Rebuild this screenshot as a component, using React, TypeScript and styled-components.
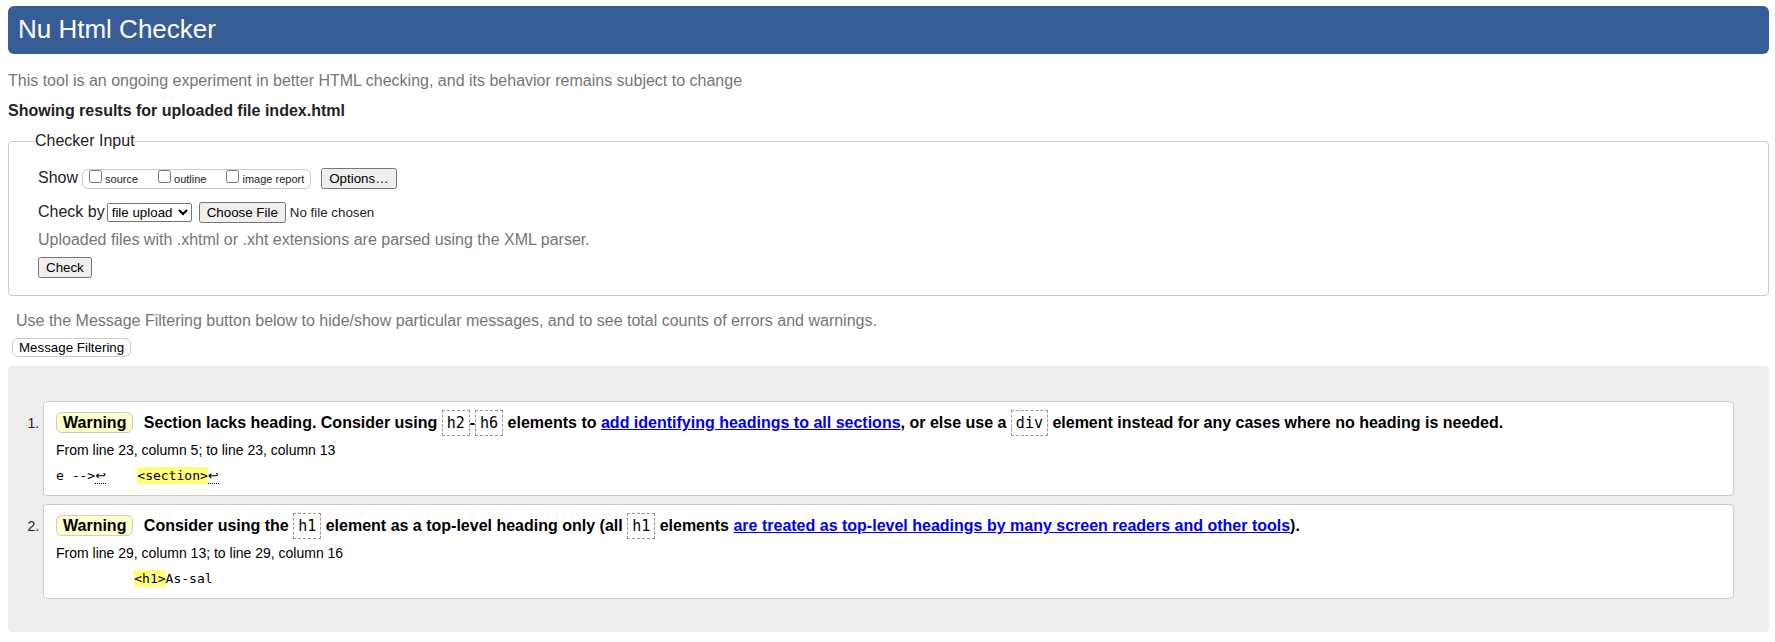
import React from "react";
import styled, { createGlobalStyle } from "styled-components";

const GlobalStyle = createGlobalStyle`
  body {
    margin: 6px 6px 10px 8px;
    background: #fff;
    color: #1f2126;
    font-family: Arial, "Liberation Sans", sans-serif;
    font-size: 16px;
    line-height: 20px;
  }
  button, select, input {
    font-family: Arial, "Liberation Sans", sans-serif;
  }
`;

const Banner = styled.header`
  padding: 0 10px;
  border-radius: 6px;
  background: #365d95;
  color: #fff;
`;

const Title = styled.h1`
  margin: 0;
  padding-bottom: 2px;
  font-size: 26px;
  font-weight: normal;
  line-height: 46px;
`;

const Tagline = styled.p`
  margin: 17px 0 10px;
  color: #767676;
`;

const ResultsHeading = styled.h2`
  margin: 0 0 10px;
  font-size: 16px;
  font-weight: bold;
`;

const InputPanel = styled.fieldset`
  margin: 0;
  padding: 0 26px 17px;
  border: 1px solid #ccc;
  border-radius: 4px;
`;

const PanelLegend = styled.legend`
  padding: 0;
`;

const Fields = styled.div`
  display: flex;
  flex-direction: column;
  align-items: flex-start;
  padding: 17px 3px 0;
`;

const FieldRow = styled.div<{ $below: number }>`
  display: flex;
  align-items: baseline;
  margin-bottom: ${({ $below }) => $below}px;
`;

const ShowOptions = styled.span`
  display: inline-flex;
  align-items: baseline;
  gap: 20px;
  margin: 0 10px 0 4px;
  padding: 0 6px;
  border: 1px solid #ccc;
  border-radius: 6px;
  font-size: 11px;
  line-height: 17px;
`;

const ShowOption = styled.label`
  display: inline-flex;
  align-items: baseline;
  gap: 3px;

  input {
    width: 13px;
    height: 13px;
    margin: 0;
  }
`;

const MethodSelect = styled.select`
  width: 85px;
  margin: 0 7px 0 2px;
`;

const Hint = styled.p`
  margin: 0 0 7px;
  color: #767676;
`;

const FilterHint = styled.p`
  margin: 15px 8px 7px;
  color: #767676;
`;

const FilterButton = styled.button`
  display: block;
  margin: 0 4px 9px;
  padding: 1px 6px;
  border: 1px solid #ccc;
  border-radius: 6px;
  background: #fff;
  color: #000;
`;

const MessageList = styled.ol`
  display: grid;
  gap: 8px;
  margin: 0;
  padding: 35px 35px 33px;
  border-radius: 4px;
  background: #eee;
  font-size: 14px;
`;

const Message = styled.li`
  padding: 11px 12px 10px;
  border: 1px solid #ccc;
  border-radius: 4px;
  background: #fff;
  color: #000;

  &::marker {
    color: #1f2126;
  }
`;

const MessageText = styled.p`
  margin: 0 0 9px;
  font-size: 16px;
  font-weight: bold;
`;

const Badge = styled.strong`
  margin-right: 6px;
  padding: 1px 6px;
  border: 1px solid #ccc;
  border-radius: 6px;
  background: #ffc;
`;

const Code = styled.code`
  padding: 3px 4px;
  border: 1px dashed #999;
  font-family: "DejaVu Sans Mono", monospace;
  font-size: 15px;
  font-weight: normal;
  line-height: 1;
`;

const DocLink = styled.a`
  color: #00e;
`;

const Location = styled.p`
  margin: 0 0 9px;
  line-height: 16px;
`;

const Snippet = styled.pre`
  margin: 0;
  font-family: "DejaVu Sans Mono", monospace;
  font-size: 13px;
  line-height: 18px;
`;

const Highlight = styled.mark`
  padding: 1px 0;
  background: #ff7;
  color: #000;
`;

const LineBreak = styled.span`
  border-bottom: 1px dotted #000;
  font-family: "DejaVu Sans", sans-serif;
  line-height: 1;
`;

const showOptions = ["source", "outline", "image report"];

export default function App() {
  return (
    <>
      <GlobalStyle />
      <Banner>
        <Title>Nu Html Checker</Title>
      </Banner>
      <main>
        <Tagline>
          This tool is an ongoing experiment in better HTML checking, and its behavior remains subject to change
        </Tagline>
        <ResultsHeading>Showing results for uploaded file index.html</ResultsHeading>
        <form onSubmit={(event) => event.preventDefault()}>
          <InputPanel>
            <PanelLegend>Checker Input</PanelLegend>
            <Fields>
              <FieldRow $below={13}>
                <span>Show</span>
                <ShowOptions role="group" aria-label="Show">
                  {showOptions.map((name) => (
                    <ShowOption key={name}>
                      <input type="checkbox" name={name} />
                      {name}
                    </ShowOption>
                  ))}
                </ShowOptions>
                <button type="button">Options…</button>
              </FieldRow>
              <FieldRow $below={7}>
                <label htmlFor="method">Check by</label>
                <MethodSelect id="method" defaultValue="file">
                  <option value="file">file upload</option>
                </MethodSelect>
                <input type="file" aria-label="File to check" />
              </FieldRow>
              <Hint>Uploaded files with .xhtml or .xht extensions are parsed using the XML parser.</Hint>
              <button type="submit">Check</button>
            </Fields>
          </InputPanel>
        </form>
        <FilterHint>
          Use the Message Filtering button below to hide/show particular messages, and to see total counts of errors
          and warnings.
        </FilterHint>
        <FilterButton type="button">Message Filtering</FilterButton>
        <MessageList>
          <Message>
            <MessageText>
              <Badge>Warning</Badge> Section lacks heading. Consider using <Code>h2</Code>-<Code>h6</Code> elements to{" "}
              <DocLink href="#headings">add identifying headings to all sections</DocLink>, or else use a{" "}
              <Code>div</Code> element instead for any cases where no heading is needed.
            </MessageText>
            <Location>From line 23, column 5; to line 23, column 13</Location>
            <Snippet>
              {"e -->"}
              <LineBreak>↩</LineBreak>
              {"    "}
              <Highlight>{"<section>"}</Highlight>
              <LineBreak>↩</LineBreak>
            </Snippet>
          </Message>
          <Message>
            <MessageText>
              <Badge>Warning</Badge> Consider using the <Code>h1</Code> element as a top-level heading only (all{" "}
              <Code>h1</Code> elements{" "}
              <DocLink href="#top-level">
                are treated as top-level headings by many screen readers and other tools
              </DocLink>
              ).
            </MessageText>
            <Location>From line 29, column 13; to line 29, column 16</Location>
            <Snippet>
              {"          "}
              <Highlight>{"<h1>"}</Highlight>
              As-sal
            </Snippet>
          </Message>
        </MessageList>
      </main>
    </>
  );
}
